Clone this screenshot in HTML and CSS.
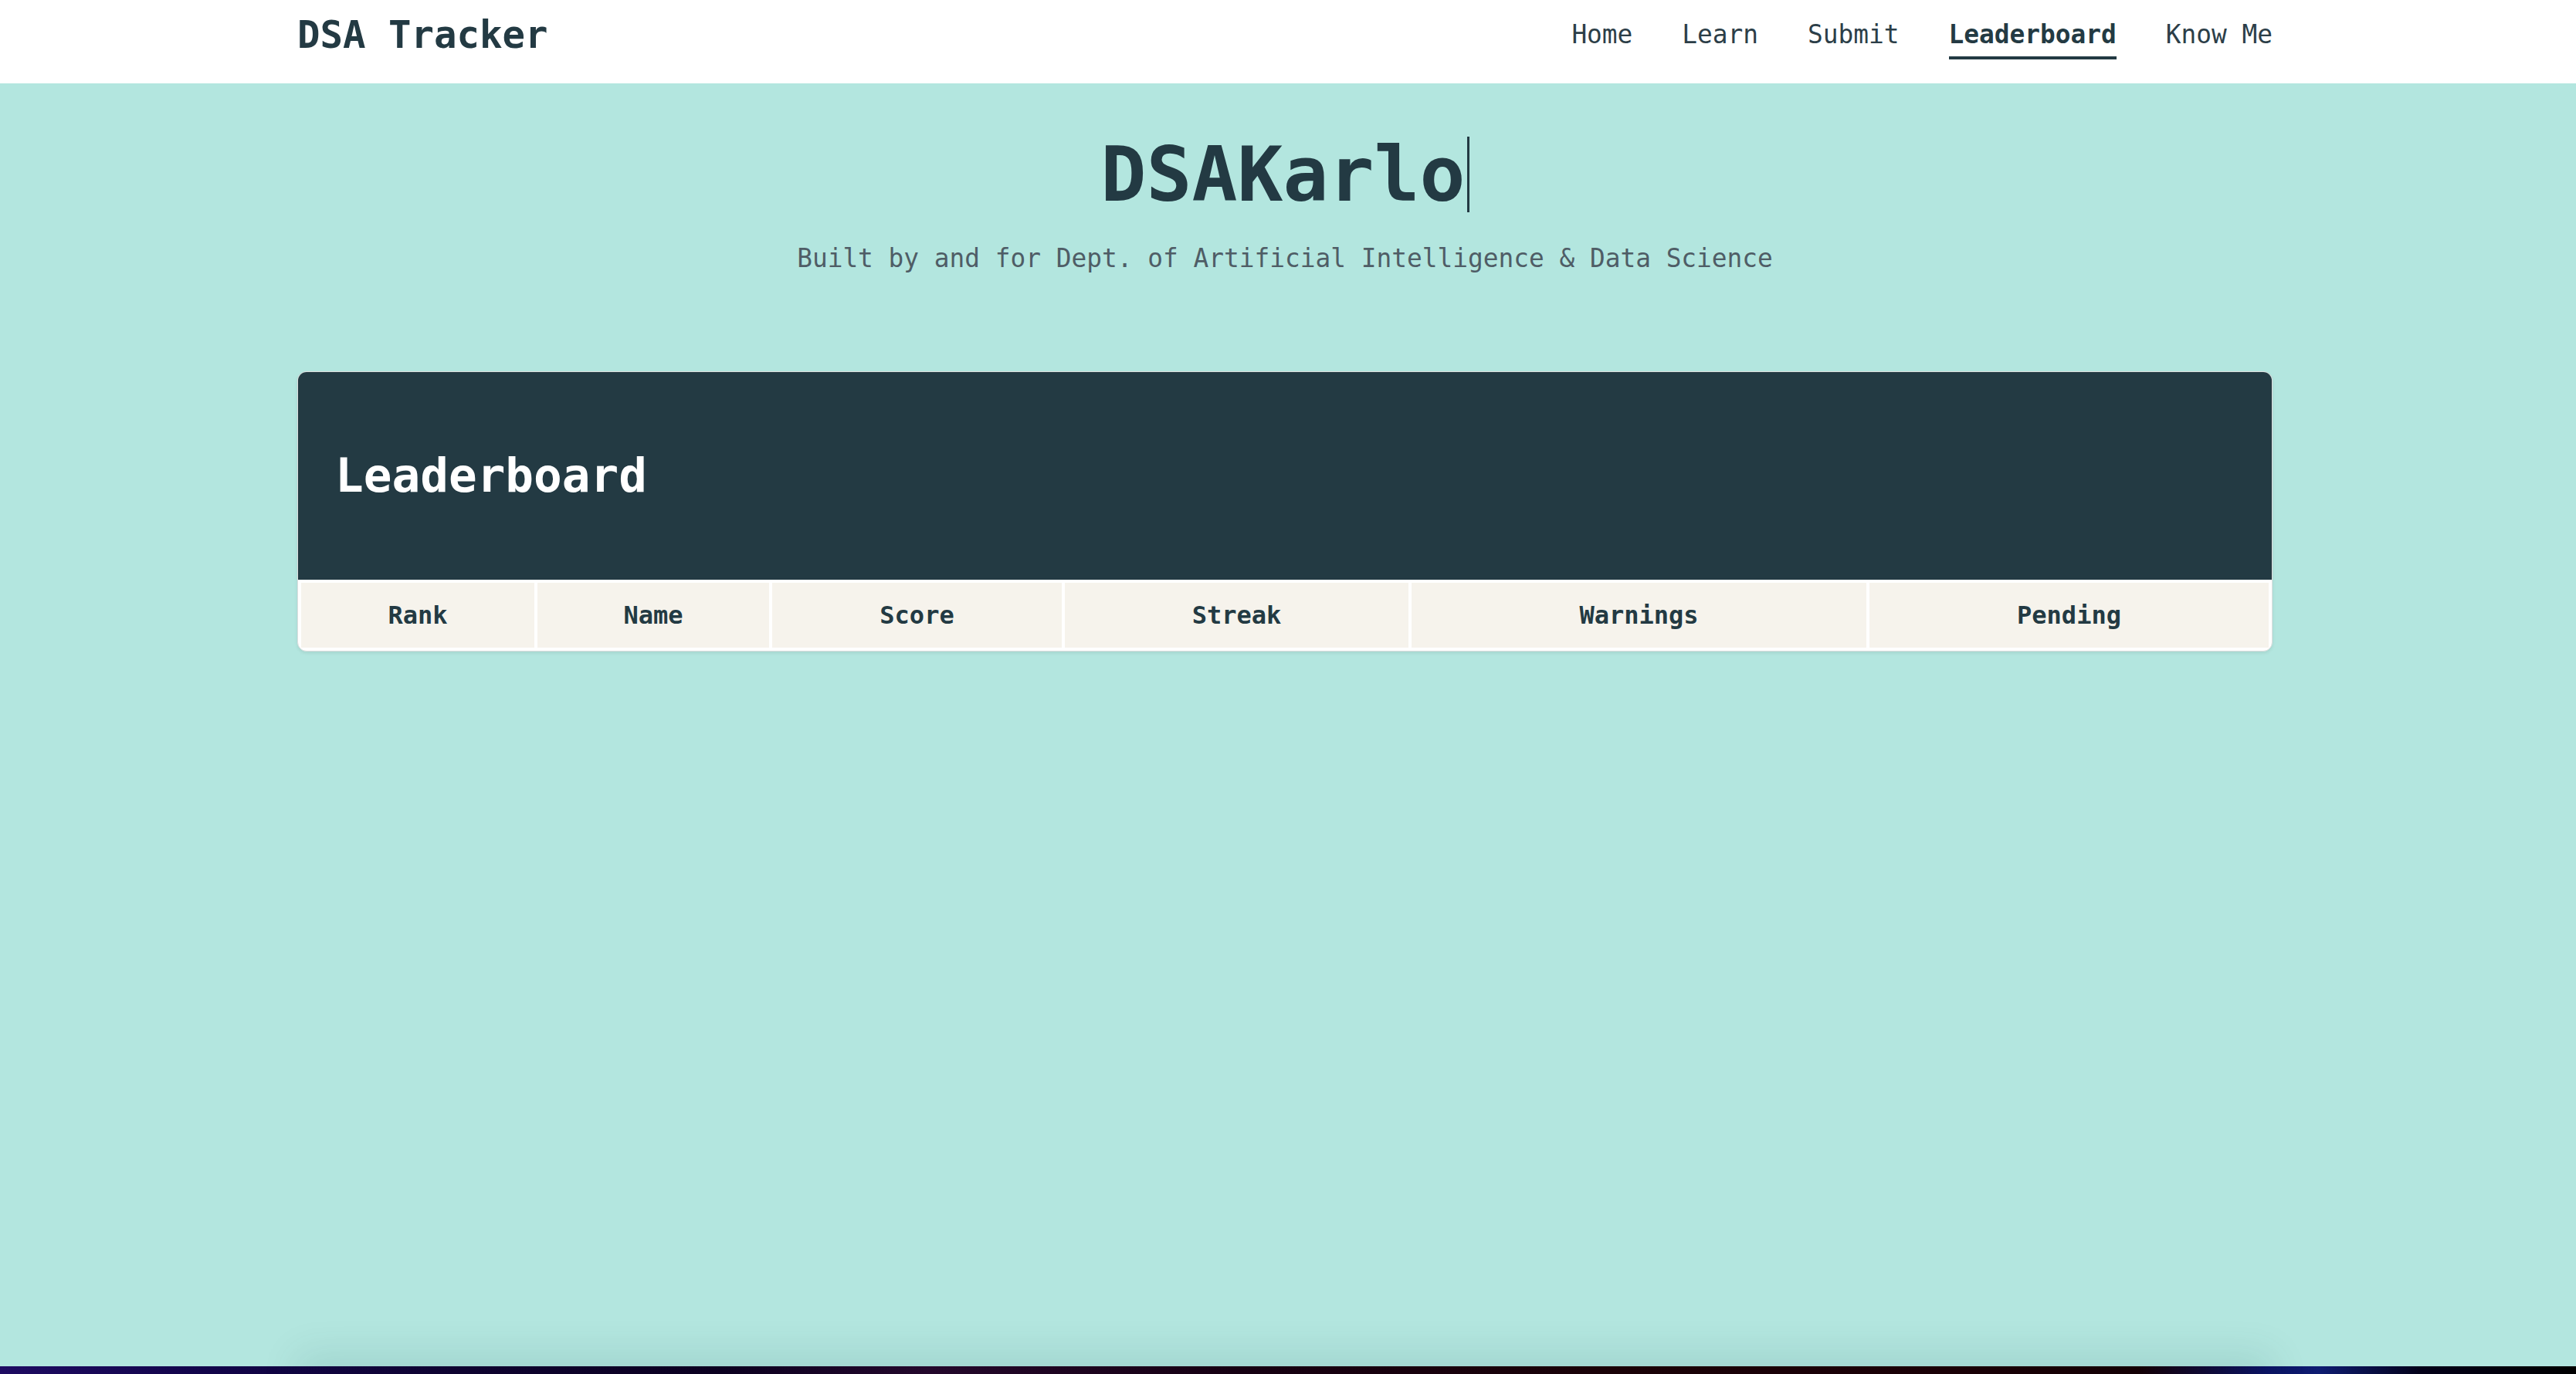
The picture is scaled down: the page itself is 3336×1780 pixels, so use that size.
FILE: index.html
```html
<!DOCTYPE html>
<html lang="en">
<head>
<meta charset="utf-8">
<title>DSA Tracker</title>
<link rel="stylesheet" href="styles.css">
</head>
<body>
<header class="nav">
  <div class="container nav-inner">
    <a class="logo" href="#">DSA Tracker</a>
    <nav class="links">
      <a href="#">Home</a>
      <a href="#">Learn</a>
      <a href="#">Submit</a>
      <a href="#" class="active">Leaderboard</a>
      <a href="#">Know Me</a>
    </nav>
  </div>
</header>
<main class="main">
  <div class="container">
    <section class="hero">
      <h1 class="title"><span class="typed">DSAKarlo</span></h1>
      <p class="subtitle">Built by and for Dept. of Artificial Intelligence &amp; Data Science</p>
    </section>
    <section class="card">
      <div class="card-head">
        <h2 class="card-title">Leaderboard</h2>
      </div>
      <table class="board">
        <thead>
          <tr>
            <th class="w-rank">Rank</th>
            <th class="w-name">Name</th>
            <th class="w-score">Score</th>
            <th class="w-streak">Streak</th>
            <th class="w-warn">Warnings</th>
            <th class="w-pend">Pending</th>
          </tr>
        </thead>
        <tbody></tbody>
      </table>
    </section>
  </div>
</main>
<footer class="footer">
  <div class="container footer-inner"></div>
</footer>
</body>
</html>
```
FILE: styles.css
```css
* { box-sizing: border-box; }
html, body { margin: 0; padding: 0; }
body {
  background: #b3e6df;
  font-family: "DejaVu Sans Mono", "Liberation Mono", monospace;
  color: #233a43;
}
.container {
  width: 2558px;
  margin-left: calc(50% - 1283px);
}
.nav {
  background: #ffffff;
  height: 108px;
}
.nav-inner {
  display: flex;
  justify-content: space-between;
  align-items: flex-start;
  padding-top: 17px;
}
.logo {
  font-size: 49px;
  font-weight: 700;
  line-height: 1.2;
  color: #233a43;
  text-decoration: none;
}
.links {
  display: flex;
  gap: 64px;
  margin-top: 9px;
}
.links a {
  font-size: 32.8px;
  line-height: 1.2;
  color: #2c3e48;
  text-decoration: none;
  padding-bottom: 8px;
  border-bottom: 4px solid transparent;
}
.links a.active {
  font-weight: 700;
  color: #233a43;
  border-bottom-color: #233a43;
}
.main {
  min-height: 1662px;
}
.hero {
  text-align: center;
  padding-top: 69px;
}
.title {
  margin: 0;
  font-size: 98px;
  line-height: 1;
  font-weight: 700;
  color: #233a43;
}
.typed {
  display: inline-block;
  padding-right: 2px;
  border-right: 3px solid #233a43;
}
.subtitle {
  margin: 41px 0 0;
  font-size: 32.8px;
  line-height: 1.2;
  color: #4f5d66;
}
.card {
  margin-top: 126px;
  background: #ffffff;
  border: 1px solid #dedede;
  border-radius: 12px;
  overflow: hidden;
  box-shadow: 0 2px 4px rgba(0, 0, 0, 0.08);
}
.card-head {
  background: #233a43;
  padding: 97px 48px 98px;
}
.card-title {
  margin: 0;
  font-size: 61px;
  line-height: 1.2;
  font-weight: 700;
  color: #ffffff;
}
.board {
  width: 100%;
  border-collapse: separate;
  border-spacing: 4px;
  table-layout: fixed;
}
.board th {
  background: #f6f3ec;
  height: 84px;
  padding: 0;
  font-size: 32px;
  font-weight: 700;
  color: #233a43;
  text-align: center;
}
.w-rank { width: 302px; }
.w-name { width: 300px; }
.w-score { width: 375px; }
.w-streak { width: 445px; }
.w-warn { width: 589px; }
.w-pend { width: auto; }
.footer {
  height: 300px;
  background: linear-gradient(90deg, #1e0b62 0%, #12044a 8%, #0e0330 18%, #0b0020 28%, #24082c 36%, #160012 48%, #1a0208 62%, #1a0006 76%, #140004 83%, #0a1262 88%, #0e1c72 90%, #030018 94%, #000000 100%);
}
.footer-inner {
  height: 60px;
  box-shadow: 0 -16px 50px rgba(0, 70, 70, 0.11);
}
```
